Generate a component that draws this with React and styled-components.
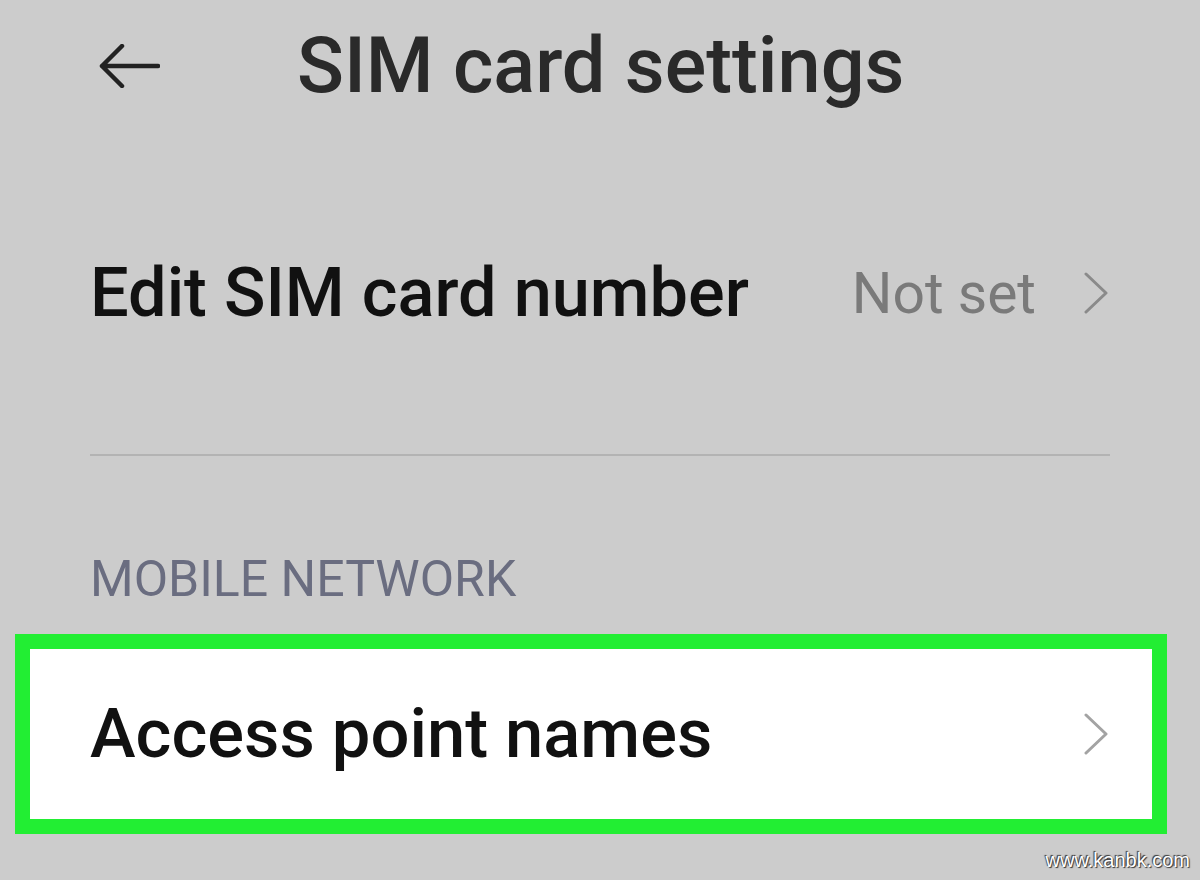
import { createGlobalStyle, styled } from "styled-components";

const GlobalStyle = createGlobalStyle`
  html, body {
    margin: 0;
    padding: 0;
    background: #cccccc;
  }
  body {
    font-family: Roboto, "Liberation Sans", sans-serif;
  }
`;

function BackArrow() {
  return (
    <svg width="62" height="44" viewBox="0 0 62 44" fill="none">
      <path
        d="M60 22 H4 M24 2 L4 22 L24 42"
        stroke="#222"
        strokeWidth="4.5"
        strokeLinecap="round"
        strokeLinejoin="round"
      />
    </svg>
  );
}

function Chevron({ color }) {
  return (
    <svg width="24" height="42" viewBox="0 0 24 42" fill="none">
      <path
        d="M2 2 L22 21 L2 40"
        stroke={color}
        strokeWidth="3"
        strokeLinecap="round"
        strokeLinejoin="round"
      />
    </svg>
  );
}

export default function App() {
  return (
    <>
      <GlobalStyle />
      <Screen>
        <Header>
          <BackArrow />
          <Title>SIM card settings</Title>
        </Header>

        <SettingRow>
          <RowLabel size={68.5}>Edit SIM card number</RowLabel>
          <RowValue>
            <ValueText>Not set</ValueText>
            <Chevron color="#8a8a8a" />
          </RowValue>
        </SettingRow>

        <Divider />

        <SectionLabel>MOBILE NETWORK</SectionLabel>

        <HighlightRow>
          <RowLabel size={68.7}>Access point names</RowLabel>
          <Chevron color="#a3a3a3" />
        </HighlightRow>

        <Watermark>www.kanbk.com</Watermark>
      </Screen>
    </>
  );
}

const Screen = styled.div`
position: relative;
width: 1200px;
height: 880px;
overflow: hidden;
background: #cccccc;
display: flex;
flex-direction: column;
`

const Header = styled.header`
height: 132px;
display: flex;
align-items: center;
padding-left: 98px;
gap: 137px;
`

const Title = styled.h1`
margin: 0;
font-size: 77.5px;
line-height: 1;
font-weight: 500;
color: #2a2a2a;
`

const SettingRow = styled.div`
height: 322px;
display: flex;
align-items: center;
justify-content: space-between;
padding: 0 90px 0 90px;
`

const RowLabel = styled.span`
font-size: ${(p) => p.size}px;
line-height: 1;
font-weight: 500;
color: #111;
`

const RowValue = styled.div`
display: flex;
align-items: center;
gap: 48px;
margin-right: 2px;
`

const ValueText = styled.span`
font-size: 57px;
line-height: 1;
color: #7a7a7a;
`

const Divider = styled.hr`
margin: 0 90px;
border: none;
height: 2px;
background: #b3b3b3;
`

const SectionLabel = styled.div`
margin: 98px 0 0 90px;
font-size: 50px;
line-height: 1;
color: #6a6d80;
`

const HighlightRow = styled.div`
margin: 30px 33px 0 15px;
height: 170px;
border: 15px solid #22ee33;
background: #fff;
display: flex;
align-items: center;
justify-content: space-between;
padding: 0 44px 0 60px;
`

const Watermark = styled.div`
position: absolute;
right: 10px;
bottom: 8px;
font-family: "Liberation Sans", Arial, sans-serif;
font-size: 20px;
color: #fff;
text-shadow: 1px 1px 1px #333, -1px -1px 1px #333;
`
